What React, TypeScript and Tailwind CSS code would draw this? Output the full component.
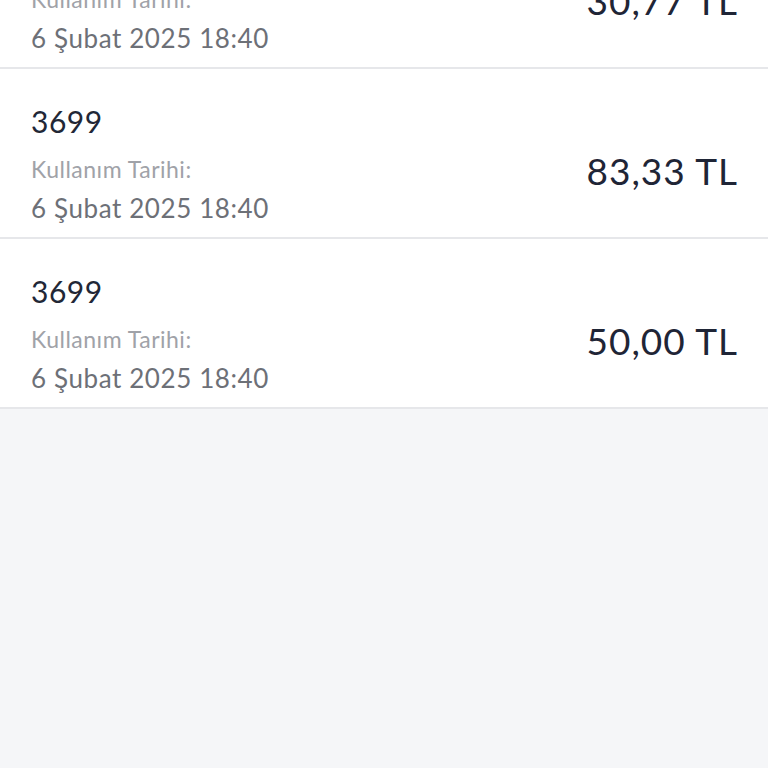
import React from 'react';

interface Usage {
  code: string;
  date: string;
  amount: string;
}

const usages: Usage[] = [
  { code: '3699', date: '6 Şubat 2025 18:40', amount: '30,77 TL' },
  { code: '3699', date: '6 Şubat 2025 18:40', amount: '83,33 TL' },
  { code: '3699', date: '6 Şubat 2025 18:40', amount: '50,00 TL' },
];

const UsageRow: React.FC<{ item: Usage }> = ({ item }) => (
  <div className="flex h-[170px] items-center justify-between border-b-2 border-[#e6e7ea] bg-white pl-[31px] pr-[30px]">
    <div className="flex flex-col pt-[20px]">
      <span className="text-[30px] leading-[36px] tracking-[0.5px] text-[#222736]">{item.code}</span>
      <span className="mt-[16px] text-[23px] leading-[28px] tracking-[0.5px] text-[#a0a2a8]">Kullanım Tarihi:</span>
      <span className="mt-[10px] text-[26px] leading-[30px] tracking-[0.6px] text-[#6d7077]">{item.date}</span>
    </div>
    <span className="pt-[36px] text-[37px] leading-[40px] tracking-[1px] text-[#1f2536]">{item.amount}</span>
  </div>
);

export default function App() {
  return (
    <div className="h-[768px] w-[768px] overflow-hidden bg-[#f5f6f8] font-['Lato',sans-serif]">
      <div className="-mt-[101px]">
        {usages.map((item, i) => (
          <UsageRow key={i} item={item} />
        ))}
      </div>
    </div>
  );
}
